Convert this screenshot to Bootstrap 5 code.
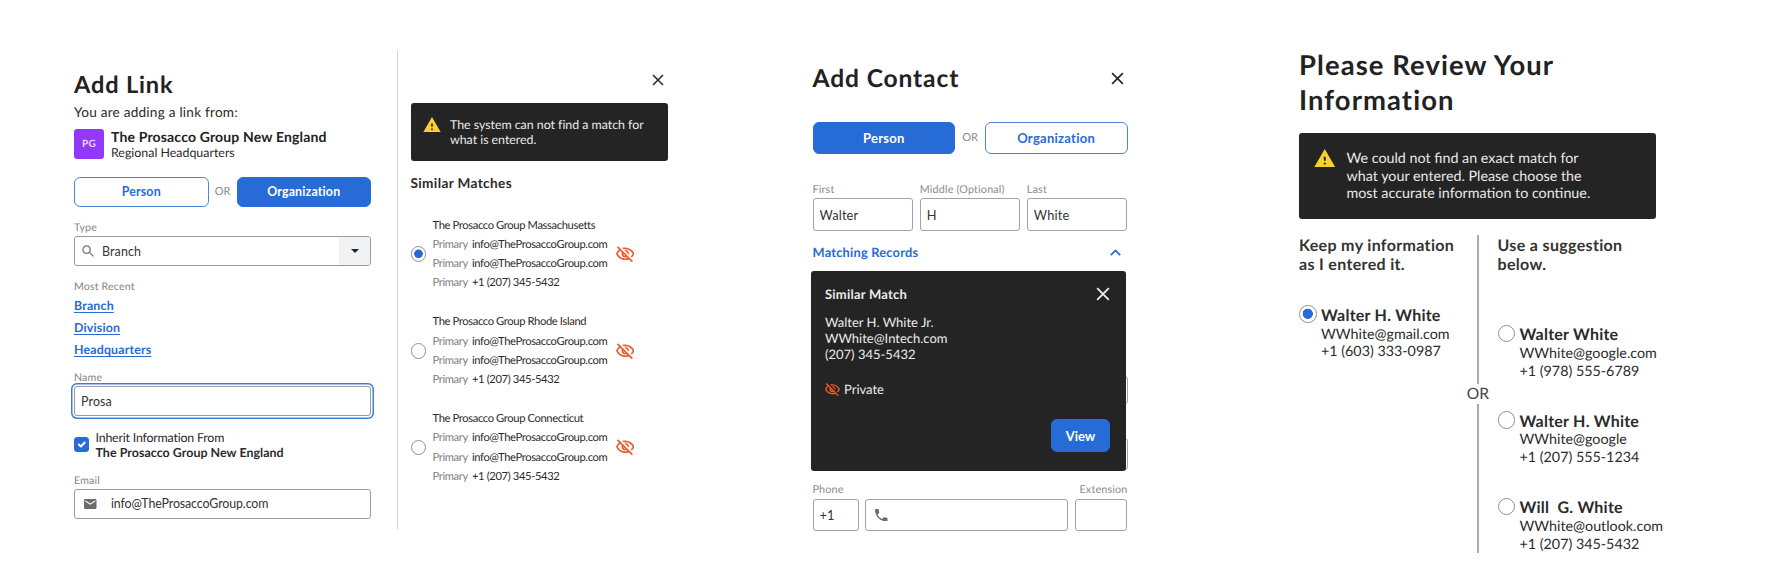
<!DOCTYPE html>
<html lang="en">
<head>
    <meta charset="UTF-8">
    <meta name="viewport" content="width=device-width, initial-scale=1.0">
    <title>Matching Records</title>
    <link href="https://cdn.jsdelivr.net/npm/bootstrap@5.3.0/dist/css/bootstrap.min.css" rel="stylesheet">
    <style>
        body {
            font-family: Lato, "Liberation Sans", sans-serif;
            color: #2b2b2b;
            background: #fff;
            letter-spacing: .01em;
            text-rendering: geometricPrecision;
            overflow: hidden;
        }
        svg { display: block; flex: none; }
        h1, h2, h3, p { margin: 0; }
        h1 { font-weight: 700; color: #222; letter-spacing: .035em; }
        .btn {
            --bs-btn-font-weight: 700;
            --bs-btn-padding-y: 0;
            --bs-btn-border-radius: 6px;
            --bs-btn-font-size: 12.4px;
            padding-top: 1px;
            letter-spacing: inherit;
        }
        .btn-primary {
            --bs-btn-bg: #276bd6;
            --bs-btn-border-color: #276bd6;
        }
        .btn-outline-primary {
            --bs-btn-color: #276bd6;
            --bs-btn-border-color: #4a85e0;
        }
        .choice { display: grid; grid-template-columns: 1fr 28px 1fr; align-items: center; }
        .choice .btn { height: 30px; }
        .choice span { font-size: 11px; color: #8a8a8a; text-align: center; letter-spacing: 0; }
        .form-label { display: block; margin: 0 0 1.4px; padding-top: 1px; font-size: 10.6px; line-height: 14px; color: #858585; }
        .form-control {
            height: 30px;
            padding: 0 6px;
            border: 1px solid #9a9a9a;
            border-radius: 3px;
            font-size: 12.4px;
            color: #333;
            letter-spacing: inherit;
        }
        .field { display: flex; align-items: center; height: 30px; border: 1px solid #9a9a9a; border-radius: 3px; overflow: hidden; }
        .field .form-control { border: 0; height: 28px; }
        .field .mail-input { padding-left: 14.5px; letter-spacing: -.11px; }
        .notice { display: flex; background: #242424; color: #e9e9e9; border-radius: 3px; letter-spacing: 0; }
        .blue { color: #276bd6; }
        .form-check-input { margin: 0; flex: none; }
        .form-check-input[type=radio] { width: 15.5px; height: 15.5px; border-color: #8f8f8f; }
        .form-check-input[type=radio]:checked {
            background-color: #fff;
            background-image: radial-gradient(circle, #276bd6 0 4px, transparent 4.6px);
        }

        /* add link */
        .link-form { width: 297px; margin: 67px 26px 0 74px; }
        .link-form h1 { font-size: 23.6px; line-height: 36px; }
        .intro { font-size: 13.6px; line-height: 20px; margin-top: -.9px; letter-spacing: .017em; }
        .avatar { width: 30px; height: 30px; border-radius: 3px; background: #9138fb; color: #e6dcff; font-size: 10px; font-weight: 700; }
        .org-name { font-size: 14px; line-height: 16px; font-weight: 700; color: #222; }
        .org-sub { font-size: 12.4px; line-height: 15px; letter-spacing: 0; }
        .caret { width: 31px; height: 28px; background: #f1f2f4; }
        .recent a { display: block; width: max-content; font-size: 12.4px; line-height: 21.7px; font-weight: 700; color: #276bd6; text-underline-offset: 2px; }
        .focused { box-shadow: 0 0 0 1.5px #fff, 0 0 0 3px #3f7ddd; }
        .inherit { margin-top: 13.4px; gap: 6.5px; font-size: 12.4px; line-height: 15px; letter-spacing: -.2px; }
        .inherit b { letter-spacing: .05px; }
        .inherit .form-check-input { width: 15px; height: 15px; border-radius: 3px; }
        .inherit .form-check-input:checked { background-color: #276bd6; border-color: #276bd6; }

        /* similar matches */
        .matches { width: 271px; height: 478px; margin-top: 51px; padding: 22.5px 0 0 12.5px; border-left: 1px solid #d3d3d3; }
        .matches .notice { width: 257.5px; height: 58.5px; margin-top: 17px; padding: 14px 12px; gap: 9.5px; font-size: 12.4px; line-height: 15.3px; letter-spacing: -.03px; }
        .matches h2 { margin: 13px 0 23.8px; font-size: 13.6px; line-height: 18px; font-weight: 700; letter-spacing: .027em; }
        .match { display: flex; align-items: center; height: 76.8px; margin-bottom: 19.9px; font-size: 11.2px; line-height: 19.2px; letter-spacing: -.37px; }
        .match-text { width: 175px; margin: 0 8px 0 6.5px; white-space: nowrap; }
        .match-text span { display: inline-block; width: 39.5px; color: #808080; }

        /* add contact */
        .contact { width: 315px; margin: 61px 0 0 144.5px; }
        .contact h1 { font-size: 24.6px; line-height: 34px; padding-top: 1px; margin-bottom: -1px; }
        .contact .choice { margin-top: 26.5px; grid-template-columns: 1fr 29.5px 1fr; }
        .contact .choice .btn { height: 32.5px; font-size: 13px; letter-spacing: .02em; }
        .contact .form-label { font-size: 10.8px; color: #8c8c8c; }
        .contact .form-control { height: 32.5px; border-color: #a3a3a3; font-size: 12.8px; }
        .names { display: grid; grid-template-columns: repeat(3, 1fr); gap: 6.5px; margin-top: 28px; }
        .records { margin-top: 12.2px; padding-right: 7px; font-size: 12.8px; line-height: 18px; font-weight: 700; letter-spacing: .017em; }
        .under { position: absolute; right: 0; width: 60px; height: 28px; background: #fff; border: 1px solid #a3a3a3; border-radius: 3px; }
        .under.upper { top: 105px; }
        .under.lower { top: 167px; height: 32px; }
        .similar { position: relative; width: 315px; height: 199.5px; margin: 0 0 0 -1.5px; padding: 14px 16px 0 14px; background: #242424; color: #ebebeb; border-radius: 3px; font-size: 13px; line-height: 16px; letter-spacing: 0; }
        .similar h3 { font-size: 13px; line-height: 18px; font-weight: 700; letter-spacing: .017em; }
        .similar .btn { width: 59px; height: 33px; --bs-btn-font-size: 13px; }
        .phone { display: grid; grid-template-columns: 46px 203px 52.5px; gap: 6.7px; }

        /* review */
        .review { width: 368px; margin: 48px 0 0 171.5px; }
        .review h1 { font-size: 27.4px; line-height: 34.5px; letter-spacing: .04em; }
        .review .notice { width: 357px; height: 86px; margin: 15.5px 0 16px; padding: 16px 15px; gap: 11px; font-size: 14.3px; line-height: 17.8px; }
        .review .notice div { padding-top: 1.3px; }
        .review h2 { padding-top: 1px; font-size: 16px; line-height: 19.5px; font-weight: 700; color: #333; letter-spacing: .021em; }
        .review .form-check-input { width: 17.5px; height: 17.5px; margin-top: -.5px; }
        .review .form-check-input:checked { background-image: radial-gradient(circle, #276bd6 0 4.8px, transparent 5.4px); }
        .keep { width: 168px; }
        .divider { width: 22px; height: 318px; font-size: 15.6px; line-height: 20px; color: #444; }
        .divider i { width: 1.5px; flex: 1; background: #ababab; }
        .person { display: flex; gap: 4.5px; height: 53.4px; margin-bottom: 33px; padding-top: 0; font-size: 14.3px; line-height: 17.7px; letter-spacing: 0; white-space: nowrap; }
        .person b { display: block; padding-top: 1.2px; font-size: 16px; line-height: 18.6px; letter-spacing: .015em; white-space: pre; }
    </style>
</head>
<body>
    <svg class="d-none">
        <symbol id="warning" viewBox="1 2 22 19"><path d="M1 21h22L12 2 1 21zm12-3h-2v-2h2v2zm0-4h-2v-4h2v4z"/></symbol>
        <symbol id="eyeOff" viewBox="1 2.4 22 19.3"><path d="M12 6c3.79 0 7.17 2.13 8.82 5.5-.59 1.22-1.42 2.27-2.41 3.12l1.41 1.41c1.39-1.23 2.49-2.77 3.18-4.53C21.27 7.11 17 4 12 4c-1.27 0-2.49.2-3.64.57l1.65 1.65C10.66 6.09 11.32 6 12 6zm-1.07 1.14L13 9.21c.57.25 1.03.71 1.28 1.28l2.07 2.07c.08-.34.14-.7.14-1.07C16.5 9.01 14.48 7 12 7c-.37 0-.72.05-1.07.14zM2.01 3.87l2.68 2.68C3.06 7.83 1.77 9.53 1 11.5 2.73 15.89 7 19 12 19c1.52 0 2.98-.29 4.32-.82l3.42 3.42 1.41-1.41L3.42 2.45 2.01 3.87zm7.5 7.5 2.61 2.61c-.04.01-.08.02-.12.02-1.38 0-2.5-1.12-2.5-2.5 0-.05.01-.08.01-.13zm-3.4-3.4 1.75 1.75c-.23.55-.36 1.15-.36 1.78 0 2.48 2.02 4.5 4.5 4.5.63 0 1.23-.13 1.77-.36l.98.98c-.88.24-1.8.38-2.75.38-3.79 0-7.17-2.13-8.82-5.5.7-1.43 1.72-2.61 2.93-3.53z"/></symbol>
        <symbol id="cross" viewBox="0 0 12 12"><path d="M1 1l10 10M11 1L1 11" fill="none" stroke="currentColor" stroke-width="1.6"/></symbol>
    </svg>

    <main class="d-flex align-items-start">
        <section class="link-form">
            <h1>Add Link</h1>
            <p class="intro">You are adding a link from:</p>
            <div class="d-flex" style="margin-top: 7px; gap: 7px">
                <div class="avatar d-flex align-items-center justify-content-center">PG</div>
                <div>
                    <div class="org-name">The Prosacco Group New England</div>
                    <div class="org-sub">Regional Headquarters</div>
                </div>
            </div>
            <div class="choice" style="margin-top: 16.9px">
                <button class="btn btn-outline-primary">Person</button>
                <span>OR</span>
                <button class="btn btn-primary">Organization</button>
            </div>

            <label class="form-label" style="margin-top: 13px">Type</label>
            <div class="field">
                <svg width="12" height="12" viewBox="0 0 12 12" fill="none" stroke="#777" stroke-width="1.3" style="margin-left: 7px"><circle cx="4.6" cy="4.6" r="3.7"/><path d="M7.4 7.4l4 4"/></svg>
                <input class="form-control" style="padding-left: 8px" value="Branch">
                <div class="caret d-flex flex-shrink-0 align-items-center justify-content-center">
                    <svg width="8" height="4" viewBox="0 0 8 4"><path d="M0 0h8L4 4z" fill="#222"/></svg>
                </div>
            </div>

            <div class="form-label" style="margin-top: 12.5px">Most Recent</div>
            <div class="recent">
                <a href="#">Branch</a>
                <a href="#">Division</a>
                <a href="#">Headquarters</a>
            </div>

            <label class="form-label" style="margin-top: 9.6px">Name</label>
            <input class="form-control focused" value="Prosa">

            <label class="inherit d-flex align-items-center">
                <input class="form-check-input" type="checkbox" checked>
                <span>Inherit Information From<br><b>The Prosacco Group New England</b></span>
            </label>

            <label class="form-label" style="margin-top: 12.8px">Email</label>
            <div class="field">
                <svg width="12.5" height="10" viewBox="2 4 20 16" fill="#6b6b6b" style="margin-left: 9px"><path d="M20 4H4c-1.1 0-2 .9-2 2v12c0 1.1.9 2 2 2h16c1.1 0 2-.9 2-2V6c0-1.1-.9-2-2-2zm0 4l-8 5-8-5V6l8 5 8-5v2z"/></svg>
                <input class="form-control mail-input" value="info@TheProsaccoGroup.com">
            </div>
        </section>

        <section class="matches">
            <svg width="12" height="12" class="ms-auto" style="margin-right: 4px"><use href="#cross"/></svg>
            <div class="notice">
                <svg width="18" height="15.5" fill="#f9d02e"><use href="#warning"/></svg>
                <div>The system can not find a match for<br>what is entered.</div>
            </div>
            <h2>Similar Matches</h2>
            <div id="matchList"></div>
        </section>

        <section class="contact">
            <div class="d-flex justify-content-between align-items-center" style="padding-right: 4px">
                <h1>Add Contact</h1>
                <svg width="13" height="13"><use href="#cross"/></svg>
            </div>
            <div class="choice">
                <button class="btn btn-primary">Person</button>
                <span>OR</span>
                <button class="btn btn-outline-primary">Organization</button>
            </div>
            <div class="names">
                <div><label class="form-label">First</label><input class="form-control" value="Walter"></div>
                <div><label class="form-label text-nowrap">Middle (Optional)</label><input class="form-control" value="H"></div>
                <div><label class="form-label">Last</label><input class="form-control" value="White"></div>
            </div>
            <div class="records blue d-flex justify-content-between align-items-center">
                Matching Records
                <svg width="11" height="7" viewBox="0 0 11 7" fill="none" stroke="#276bd6" stroke-width="1.7"><path d="M.8 6.2l4.7-4.8 4.7 4.8"/></svg>
            </div>
            <div class="position-relative" style="margin-top: 10.3px">
                <div class="under upper"></div>
                <div class="under lower"></div>
                <div class="similar">
                    <div class="d-flex justify-content-between align-items-center">
                        <h3>Similar Match</h3>
                        <svg width="14" height="14"><use href="#cross"/></svg>
                    </div>
                    <div style="margin-top: 11px">Walter H. White Jr.<br>WWhite@Intech.com<br>(207) 345-5432</div>
                    <div class="d-flex align-items-center gap-1" style="margin-top: 19px">
                        <svg width="15" height="13.3" fill="#f0592a"><use href="#eyeOff"/></svg>
                        Private
                    </div>
                    <button class="btn btn-primary d-block ms-auto" style="margin-top: 22px">View</button>
                </div>
            </div>
            <div class="d-flex justify-content-between" style="margin-top: 11.6px">
                <label class="form-label">Phone</label>
                <label class="form-label">Extension</label>
            </div>
            <div class="phone">
                <input class="form-control" value="+1">
                <div class="form-control d-flex align-items-center">
                    <svg width="12.5" height="12.5" viewBox="3 3 18 18" fill="#6b6b6b" style="margin-left: 3px"><path d="M6.62 10.79c1.44 2.83 3.76 5.14 6.59 6.59l2.2-2.2c.27-.27.67-.36 1.02-.24 1.12.37 2.33.57 3.57.57.55 0 1 .45 1 1V20c0 .55-.45 1-1 1-9.39 0-17-7.61-17-17 0-.55.45-1 1-1h3.5c.55 0 1 .45 1 1 0 1.25.2 2.45.57 3.57.11.35.03.74-.25 1.02l-2.2 2.2z"/></svg>
                </div>
                <input class="form-control">
            </div>
        </section>

        <section class="review">
            <h1>Please Review Your<br>Information</h1>
            <div class="notice">
                <svg width="21.5" height="18.5" fill="#f9d02e"><use href="#warning"/></svg>
                <div>We could not find an exact match for<br>what your entered. Please choose the<br>most accurate information to continue.</div>
            </div>
            <div class="d-flex">
                <div class="keep flex-shrink-0">
                    <h2 style="margin-bottom: 31.3px">Keep my information<br>as I entered it.</h2>
                    <div class="person">
                        <input class="form-check-input" type="radio" name="review" checked>
                        <div><b>Walter H. White</b>WWhite@gmail.com<br>+1 (603) 333-0987</div>
                    </div>
                </div>
                <div class="divider flex-shrink-0 d-flex flex-column align-items-center"><i></i>OR<i></i></div>
                <div style="margin-left: 8.5px">
                    <h2 style="margin-bottom: 50.8px">Use a suggestion<br>below.</h2>
                    <div id="suggestions"></div>
                </div>
            </div>
        </section>
    </main>

    <script src="https://cdn.jsdelivr.net/npm/bootstrap@5.3.0/dist/js/bootstrap.bundle.min.js"></script>
    <script>
        const states = ['Massachusetts', 'Rhode Island', 'Connecticut'];
        const people = [
            { name: 'Walter White', email: 'WWhite@google.com', phone: '+1 (978) 555-6789' },
            { name: 'Walter H. White', email: 'WWhite@google', phone: '+1 (207) 555-1234' },
            { name: 'Will  G. White', email: 'WWhite@outlook.com', phone: '+1 (207) 345-5432' }
        ];

        document.getElementById('matchList').innerHTML = states.map((state, index) => `
            <label class="match">
                <input class="form-check-input" type="radio" name="match" ${index === 0 ? 'checked' : ''}>
                <div class="match-text">
                    The Prosacco Group ${state}<br>
                    <span>Primary</span>info@TheProsaccoGroup.com<br>
                    <span>Primary</span>info@TheProsaccoGroup.com<br>
                    <span>Primary</span>+1 (207) 345-5432
                </div>
                <svg width="18.5" height="16.5" fill="#f0592a"><use href="#eyeOff"/></svg>
            </label>
        `).join('');

        document.getElementById('suggestions').innerHTML = people.map(person => `
            <div class="person">
                <input class="form-check-input" type="radio" name="review">
                <div><b>${person.name}</b>${person.email}<br>${person.phone}</div>
            </div>
        `).join('');
    </script>
</body>
</html>
